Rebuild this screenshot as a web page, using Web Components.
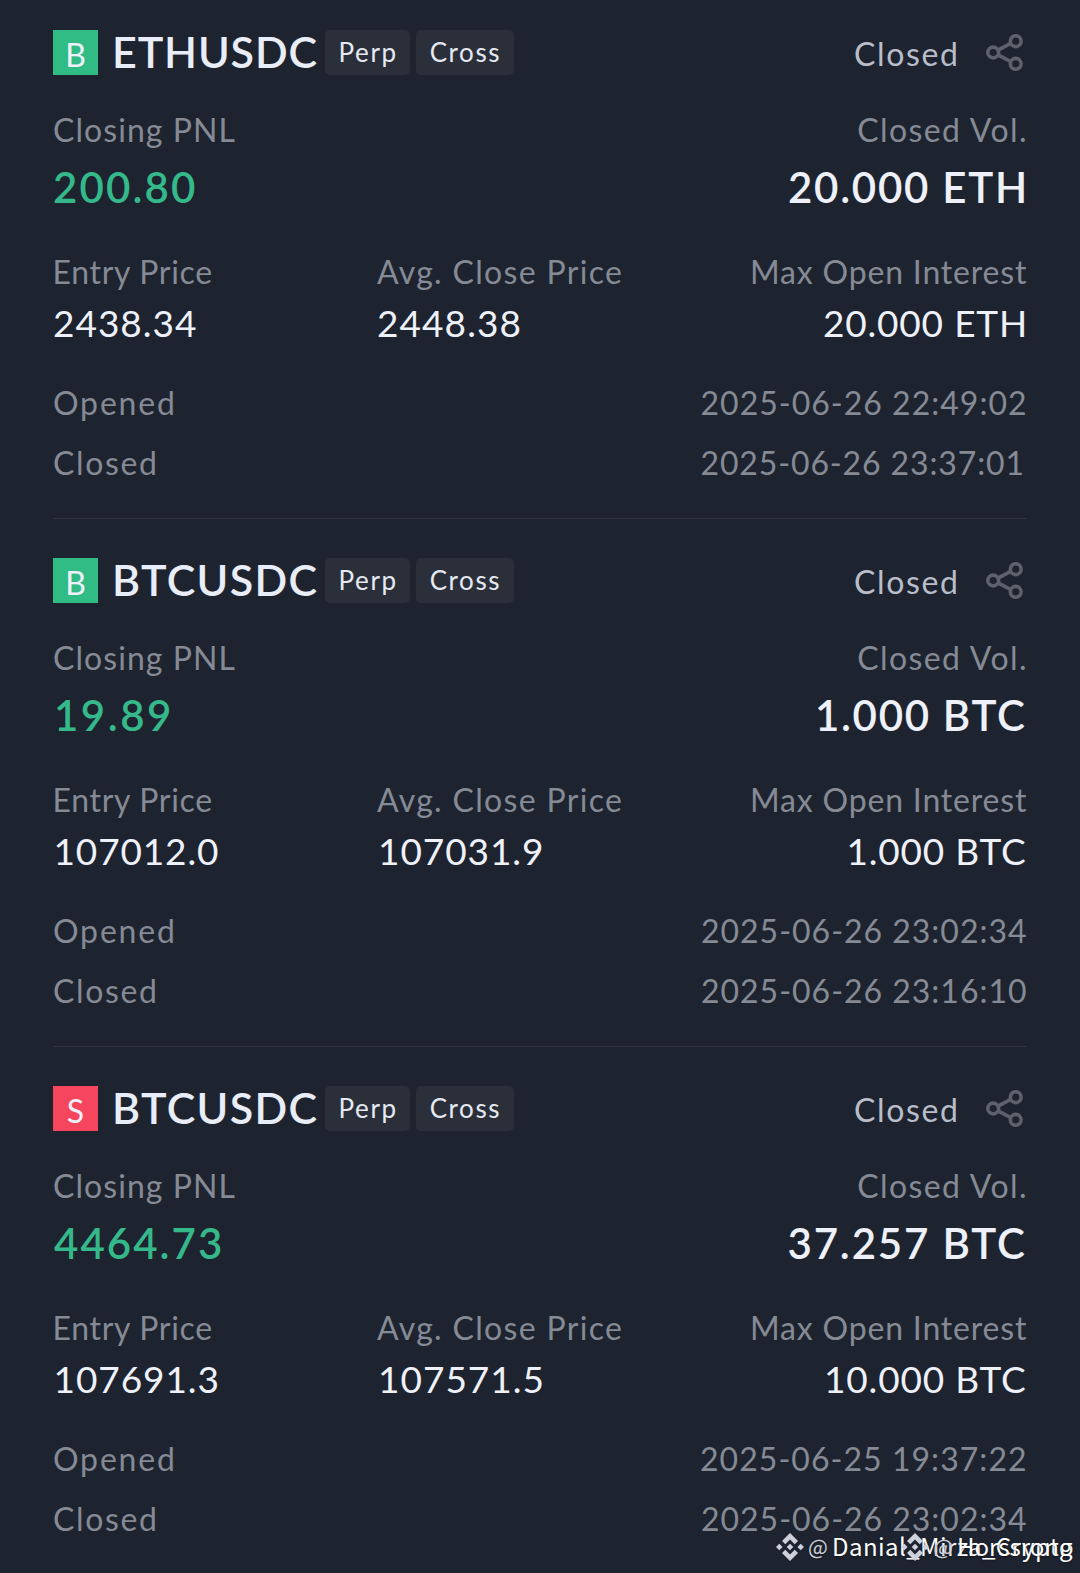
<!DOCTYPE html>
<html lang="en">
<head>
<meta charset="utf-8">
<title>Position History</title>
<style>
  body {
    margin: 0;
    background: #1e242f;
    font-family: Lato, "Open Sans", sans-serif;
  }
</style>
</head>
<body>
<position-history></position-history>

<script>
// Each text is [text, width, left inset, right inset].
const positionsArray = [
  {
    side: 'B', symbol: 'ETHUSDC', symbolWidth: 201.5,
    pnl: ['200.80', 141, 1], volume: ['20.000 ETH', 235, 0, 3],
    entry: ['2438.34', 142, 1], close: ['2448.38', 141.5, 1], interest: ['20.000 ETH', 200, 0, 3],
    opened: ['2025-06-26 22:49:02', 323.5, 0, 2], closed: ['2025-06-26 23:37:01', 321, 0, 4.5],
  },
  {
    side: 'B', symbol: 'BTCUSDC', symbolWidth: 201.5,
    pnl: ['19.89', 112, 4], volume: ['1.000 BTC', 207, 0, 2],
    entry: ['107012.0', 161.5, 3.5], close: ['107031.9', 161, 4], interest: ['1.000 BTC', 175.5, 0, 2],
    opened: ['2025-06-26 23:02:34', 324, 0, 1], closed: ['2025-06-26 23:16:10', 324, 0, 1],
  },
  {
    side: 'S', symbol: 'BTCUSDC', symbolWidth: 201.5,
    pnl: ['4464.73', 167, 1], volume: ['37.257 BTC', 236.5, 0, 2],
    entry: ['107691.3', 161, 3.5], close: ['107571.5', 160.5, 4], interest: ['10.000 BTC', 198, 0, 2],
    opened: ['2025-06-25 19:37:22', 324, 0, 2], closed: ['2025-06-26 23:02:34', 324, 0, 1],
  },
];

// Text tracked out so that its visible glyphs are exactly `width` px wide.
class TrackedText extends HTMLElement {
  constructor() {
    super();
    this.attachShadow({ mode: 'open' });
    this.shadowRoot.innerHTML = `
      <style>
        :host { display: inline-block; white-space: nowrap; }
      </style>
      <slot></slot>
    `;
  }

  connectedCallback() {
    const text = this.textContent;
    const style = getComputedStyle(this);
    const ctx = document.createElement('canvas').getContext('2d');
    ctx.font = `${style.fontWeight} ${style.fontSize} ${style.fontFamily}`;
    const size = ctx.measureText(text);
    const ink = size.actualBoundingBoxLeft + size.actualBoundingBoxRight;
    const spacing = (Number(this.getAttribute('width')) - ink) / (text.length - 1);
    this.style.letterSpacing = `${spacing}px`;
    this.style.marginLeft = `${size.actualBoundingBoxLeft}px`;
    this.style.marginRight = `${size.actualBoundingBoxRight - size.width - spacing}px`;
  }
}

class ShareIcon extends HTMLElement {
  constructor() {
    super();
    this.attachShadow({ mode: 'open' });
    this.shadowRoot.innerHTML = `
      <style>
        :host { display: block; width: 38px; height: 38px; color: #5c616c; }
        svg { display: block; }
      </style>
      <svg width="38" height="38" viewBox="0 0 38 38" fill="none" stroke="currentColor" stroke-width="3.6">
        <circle cx="7.2" cy="18.5" r="5.4"/>
        <circle cx="29.7" cy="7.2" r="5.4"/>
        <circle cx="29.7" cy="29.8" r="5.4"/>
        <path d="M12 16.1L24.8 9.3M12 20.9L24.8 27.7"/>
      </svg>
    `;
  }
}

class PositionTag extends HTMLElement {
  constructor() {
    super();
    this.attachShadow({ mode: 'open' });
    this.shadowRoot.innerHTML = `
      <style>
        :host {
          display: flex;
          justify-content: center;
          width: 85px;
          height: 45px;
          line-height: 45px;
          font-size: 26px;
          color: #e6e9f2;
          background: #2a2f3a;
          border-radius: 5px;
        }
        :host([wide]) { width: 98px; }
      </style>
      <slot></slot>
    `;
  }
}

class LabelledValue extends HTMLElement {
  constructor() {
    super();
    this.attachShadow({ mode: 'open' });
    this.shadowRoot.innerHTML = `
      <style>
        :host {
          display: flex;
          flex-direction: column;
          align-items: flex-start;
          gap: 10px;
        }
        :host([align="end"]) { align-items: flex-end; }
        :host([large]) { gap: 12px; }
        .label {
          height: 40px;
          line-height: 41px;
          font-size: 32px;
          color: #858a95;
        }
        .value {
          height: 44px;
          line-height: 44px;
          font-size: 37px;
          color: #eef1fa;
        }
        :host([large]) .value {
          height: 50px;
          line-height: 52px;
          font-size: 42px;
          font-weight: 600;
        }
        :host([profit]) .value { color: #35b98a; }
      </style>
      <div class="label"><slot name="label"></slot></div>
      <div class="value"><slot></slot></div>
    `;
  }
}

class PositionCard extends HTMLElement {
  constructor() {
    super();
    this.attachShadow({ mode: 'open' });
  }

  connectedCallback() {
    const p = this.position;
    const value = ([text, width, left = 0, right = 0]) => `<tracked-text style="padding: 0 ${right}px 0 ${left}px" width="${width}">${text}</tracked-text>`;

    this.shadowRoot.innerHTML = `
      <style>
        :host {
          display: block;
          padding: 39px 0 36px;
          border-bottom: 1px solid #2e333e;
        }
        :host(:first-of-type) { padding-top: 30px; }
        :host(:last-of-type) { border-bottom: 0; }
        .header {
          display: flex;
          height: 45px;
          margin-bottom: 34px;
        }
        .side {
          width: 45px;
          line-height: 50px;
          height: 45px;
          text-align: center;
          font-size: 32px;
          color: #eef1fa;
          background: #31bc86;
        }
        .side.S { background: #f6465d; }
        .symbol {
          width: 210px;
          margin-left: 17px;
          line-height: 44px;
          font-size: 43px;
          font-weight: 600;
          color: #e9edf7;
        }
        .tags { display: flex; gap: 6px; }
        .status {
          margin-left: auto;
          line-height: 47px;
          font-size: 32px;
          color: #b9bdc9;
        }
        share-icon { margin: 4px 3px 0 30px; }
        .totals, .time {
          display: flex;
          justify-content: space-between;
        }
        .prices {
          display: grid;
          grid-template-columns: 324px 1fr auto;
          margin: 40px 0 37px;
        }
        .time {
          height: 40px;
          line-height: 42px;
          font-size: 32px;
          color: #858a95;
        }
        .time + .time { margin-top: 20px; }
      </style>
      <div class="header">
        <div class="side ${p.side}">${p.side}</div>
        <div class="symbol">${value([p.symbol, p.symbolWidth])}</div>
        <div class="tags">
          <position-tag>${value(['Perp', 55, 1])}</position-tag>
          <position-tag wide>${value(['Cross', 68.5])}</position-tag>
        </div>
        <div class="status">${value(['Closed', 101])}</div>
        <share-icon></share-icon>
      </div>
      <div class="totals">
        <labelled-value large profit>
          <tracked-text slot="label" width="180.5" style="padding-left: 1px">Closing PNL</tracked-text>
          ${value(p.pnl)}
        </labelled-value>
        <labelled-value large align="end">
          <tracked-text slot="label" width="168" style="padding-right: 2px">Closed Vol.</tracked-text>
          ${value(p.volume)}
        </labelled-value>
      </div>
      <div class="prices">
        <labelled-value>
          <tracked-text slot="label" width="157.5" style="padding-left: 1.5px">Entry Price</tracked-text>
          ${value(p.entry)}
        </labelled-value>
        <labelled-value>
          <tracked-text slot="label" width="244">Avg. Close Price</tracked-text>
          ${value(p.close)}
        </labelled-value>
        <labelled-value align="end">
          <tracked-text slot="label" width="275">Max Open Interest</tracked-text>
          ${value(p.interest)}
        </labelled-value>
      </div>
      <div class="time">${value(['Opened', 119, 1])}${value(p.opened)}</div>
      <div class="time">${value(['Closed', 101, 1])}${value(p.closed)}</div>
    `;
  }
}

class AuthorMark extends HTMLElement {
  constructor() {
    super();
    this.attachShadow({ mode: 'open' });
    this.shadowRoot.innerHTML = `
      <style>
        :host {
          position: absolute;
          z-index: 1;
          right: 7px;
          top: 1529px;
          display: flex;
          align-items: center;
          height: 34px;
          font: 24px/34px "Noto Sans CJK SC", "Noto Sans", sans-serif;
          color: #fff;
          white-space: nowrap;
          text-shadow: 0 1px 2px #0006;
        }
        svg { margin: 2px 4px 0 0; color: #cdd1dc; }
        .at { margin-right: 6px; font-size: 21px; color: #cdd1dc; }
      </style>
      <svg width="28" height="28" viewBox="0 0 28 28" fill="currentColor">
        <path d="M14 0L22 8L18.7 11.3L14 6.6L9.3 11.3L6 8ZM14 28L22 20L18.7 16.7L14 21.4L9.3 16.7L6 20ZM3.3 10.7L6.6 14L3.3 17.3L0 14ZM24.7 10.7L28 14L24.7 17.3L21.4 14ZM14 10.7L17.3 14L14 17.3L10.7 14Z"/>
      </svg>
      <span class="at">@</span><slot></slot>
    `;
  }
}

class PositionHistory extends HTMLElement {
  constructor() {
    super();
    this.attachShadow({ mode: 'open' });
    this.shadowRoot.innerHTML = `
      <style>
        :host {
          display: block;
          position: relative;
          box-sizing: border-box;
          height: 1573px;
          padding: 0 53px;
          overflow: hidden;
        }
      </style>
      <author-mark><tracked-text width="239">Danial_Mirza_Crypto</tracked-text></author-mark>
      <author-mark><tracked-text width="114">Horssrong</tracked-text></author-mark>
    `;
    positionsArray.forEach((position) => {
      const card = document.createElement('position-card');
      card.position = position;
      this.shadowRoot.appendChild(card);
    });
  }
}

customElements.define('tracked-text', TrackedText);
customElements.define('share-icon', ShareIcon);
customElements.define('position-tag', PositionTag);
customElements.define('labelled-value', LabelledValue);
customElements.define('position-card', PositionCard);
customElements.define('author-mark', AuthorMark);
customElements.define('position-history', PositionHistory);
</script>
</body>
</html>
